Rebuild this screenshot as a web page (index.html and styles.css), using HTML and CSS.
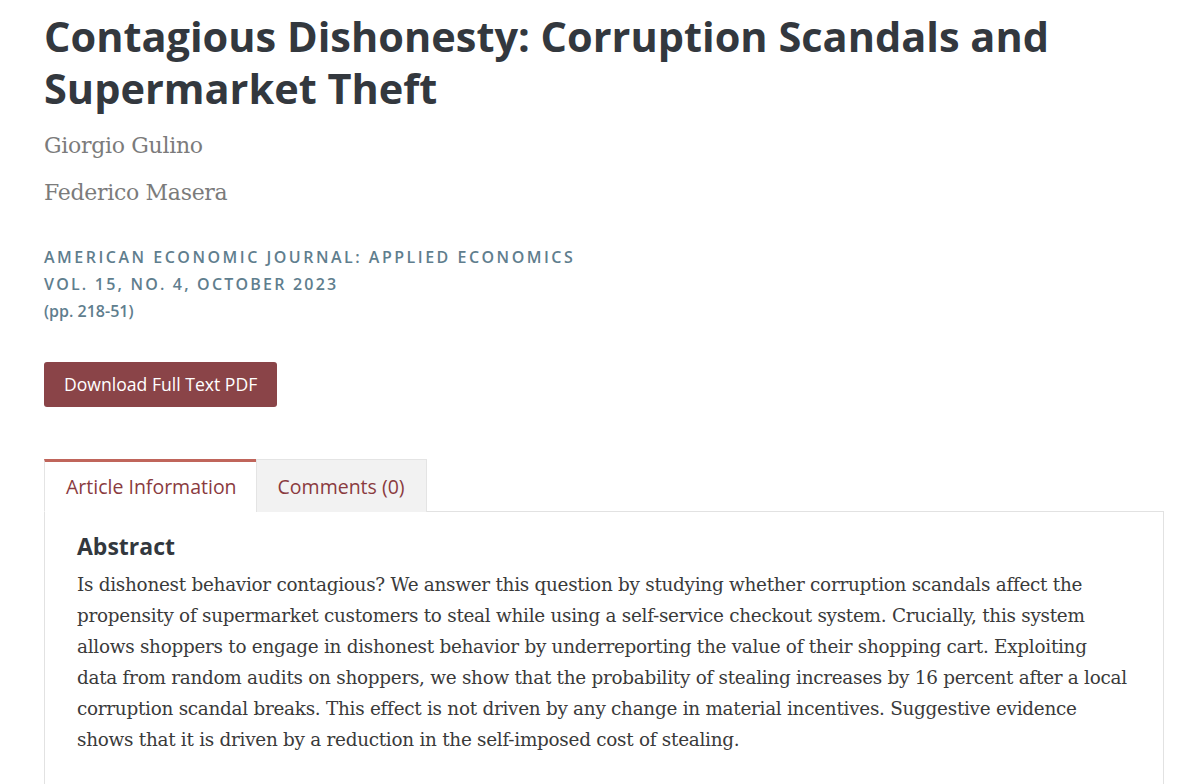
FILE: index.html
```html
<!DOCTYPE html>
<html lang="en">
<head>
<meta charset="utf-8">
<title>Contagious Dishonesty: Corruption Scandals and Supermarket Theft</title>
<link rel="stylesheet" href="styles.css">
</head>
<body>
<main class="article">
  <h1 class="title">Contagious Dishonesty: Corruption Scandals and Supermarket Theft</h1>
  <ul class="authors">
    <li>Giorgio Gulino</li>
    <li>Federico Masera</li>
  </ul>
  <div class="journal">
    <div class="journal-name">American Economic Journal: Applied Economics</div>
    <div class="journal-issue">vol. 15, no. 4, October 2023</div>
    <div class="journal-pages">(pp. 218-51)</div>
  </div>
  <a class="btn-download" href="#">Download Full Text PDF</a>
  <div class="tabs">
    <div class="tab tab-active">Article Information</div>
    <div class="tab">Comments (0)</div>
  </div>
  <section class="panel">
    <h2 class="panel-heading">Abstract</h2>
    <p class="abstract">Is dishonest behavior contagious? We answer this question by studying whether corruption scandals affect the propensity of supermarket customers to steal while using a self-service checkout system. Crucially, this system allows shoppers to engage in dishonest behavior by underreporting the value of their shopping cart. Exploiting data from random audits on shoppers, we show that the probability of stealing increases by 16 percent after a local corruption scandal breaks. This effect is not driven by any change in material incentives. Suggestive evidence shows that it is driven by a reduction in the self-imposed cost of stealing.</p>
  </section>
</main>
</body>
</html>
```

FILE: styles.css
```css
html, body {
  margin: 0;
  padding: 0;
  background: #ffffff;
}

.article {
  padding: 10px 36px 0 44px;
  font-family: "Open Sans", "Noto Sans", sans-serif;
}

.title {
  margin: 0;
  font-size: 41.5px;
  line-height: 52px;
  font-weight: 700;
  color: #33383e;
  max-width: 1090px;
}

.authors {
  list-style: none;
  margin: 17px 0 0;
  padding: 0;
  display: flex;
  flex-direction: column;
  gap: 17px;
}

.authors li {
  font-family: "DejaVu Serif", "Liberation Serif", serif;
  font-size: 22px;
  line-height: 30px;
  color: #7b7b7b;
  letter-spacing: -0.3px;
}

.journal {
  margin-top: 36px;
  color: #5f7e8e;
  font-weight: 600;
}

.journal-name,
.journal-issue {
  font-size: 16px;
  line-height: 27px;
  text-transform: uppercase;
  letter-spacing: 2.5px;
}

.journal-issue {
  letter-spacing: 2.2px;
}

.journal-pages {
  font-size: 16px;
  line-height: 27px;
}

.btn-download {
  display: inline-block;
  margin-top: 37px;
  padding: 0 20px;
  height: 45px;
  line-height: 45px;
  background: #8a4448;
  color: #ffffff;
  font-size: 17.6px;
  text-decoration: none;
  border-radius: 3px;
}

.tabs {
  display: flex;
  margin-top: 52px;
}

.tab {
  height: 53px;
  box-sizing: border-box;
  padding: 0 21px;
  display: flex;
  align-items: center;
  white-space: nowrap;
  font-size: 19.5px;
  color: #8a3b40;
  background: #f2f2f2;
  border: 1px solid #e4e4e4;
  border-bottom: none;
}

.tab-active {
  position: relative;
  z-index: 1;
  padding: 0 19px 0 21px;
  background: #ffffff;
  border-top: 3px solid #c0655b;
  border-right: none;
  border-bottom: 1px solid #ffffff;
}

.panel {
  width: 1120px;
  box-sizing: border-box;
  margin-top: -1px;
  padding: 18px 34px 30px 32px;
  border: 1px solid #e2e2e2;
}

.panel-heading {
  margin: 0;
  font-size: 23px;
  line-height: 32px;
  font-weight: 700;
  color: #33383e;
}

.abstract {
  margin: 7px 0 0;
  font-family: "DejaVu Serif", "Liberation Serif", serif;
  font-size: 18.4px;
  line-height: 31px;
  color: #3a3a3a;
  letter-spacing: -0.27px;
}
```
